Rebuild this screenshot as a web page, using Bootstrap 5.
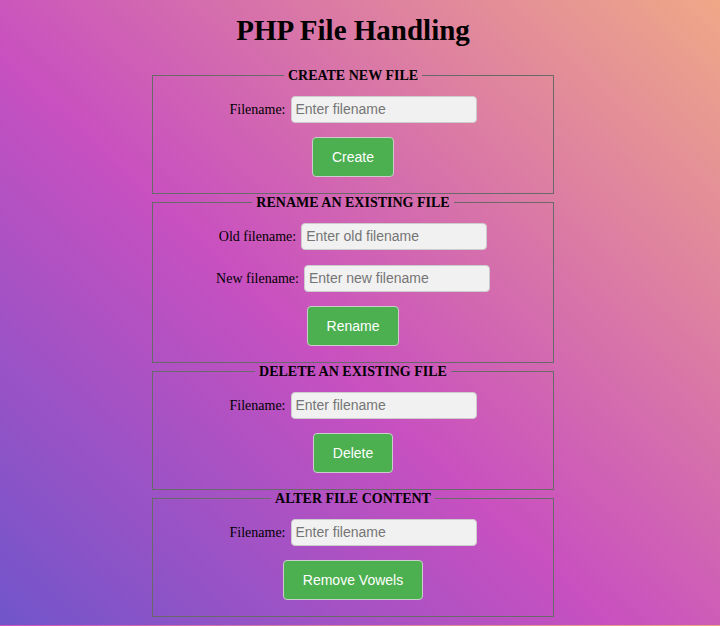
<!DOCTYPE html>
<html lang="en">
<head>
<meta charset="utf-8">
<meta name="viewport" content="width=device-width, initial-scale=1">
<title>PHP File Handling</title>
<link href="https://cdn.jsdelivr.net/npm/bootstrap@5.3.0/dist/css/bootstrap.min.css" rel="stylesheet">
<style>
  body {
    background: linear-gradient(43deg, #7155ca 0%, #c850c0 44%, #efa887 100%);
    color: #000;
    font-family: "Liberation Serif", "Times New Roman", serif;
    font-size: 14px;
    line-height: 17px;
    padding: 14px 14px 8px 0;
  }
  .page-title { font-size: 29px; line-height: 33px; margin-bottom: 20px; }
  .file-forms { max-width: 402px; }
  .file-group { border: 1px solid #696969; padding: 12px 12px 16px; }
  .file-group legend {
    float: none;
    width: auto;
    margin: 0 auto;
    padding: 0 4px;
    font-size: 14px;
    line-height: 17px;
  }
  .field-row { gap: 5px; margin-bottom: 14px; }
  .field-row + .field-row { margin-top: 15px; }
  .file-input {
    width: 186px;
    padding: 4px;
    font: 14px/17px "Liberation Sans", Arial, sans-serif;
    background: #f1f1f1;
    border: 1px solid #ccc;
    border-radius: 4px;
  }
  .file-input::placeholder { color: #757575; opacity: 1; }
  .btn-file {
    --bs-btn-color: #fff;
    --bs-btn-bg: #4caf50;
    --bs-btn-border-color: #ccc;
    --bs-btn-hover-color: #fff;
    --bs-btn-hover-bg: #45a049;
    --bs-btn-hover-border-color: #ccc;
    --bs-btn-padding-x: 19px;
    --bs-btn-padding-y: 10px;
    --bs-btn-border-radius: 4px;
    --bs-btn-font-family: "Liberation Sans", Arial, sans-serif;
    --bs-btn-font-size: 14px;
    --bs-btn-line-height: 18px;
    line-height: 18px;
  }
</style>
<script src="https://cdn.jsdelivr.net/npm/bootstrap@5.3.0/dist/js/bootstrap.bundle.min.js" defer></script>
</head>
<body>
<h1 class="page-title fw-bold text-center">PHP File Handling</h1>
<main class="file-forms mx-auto">
  <form>
    <fieldset class="file-group text-center">
      <legend class="fw-bold text-uppercase">Create new file</legend>
      <div class="field-row d-flex justify-content-center align-items-center">
        <label for="create-name">Filename:</label>
        <input class="file-input" type="text" id="create-name" placeholder="Enter filename">
      </div>
      <button type="button" class="btn btn-file">Create</button>
    </fieldset>
  </form>
  <form>
    <fieldset class="file-group text-center">
      <legend class="fw-bold text-uppercase">Rename an existing file</legend>
      <div class="field-row d-flex justify-content-center align-items-center">
        <label for="old-name">Old filename:</label>
        <input class="file-input" type="text" id="old-name" placeholder="Enter old filename">
      </div>
      <div class="field-row d-flex justify-content-center align-items-center">
        <label for="new-name">New filename:</label>
        <input class="file-input" type="text" id="new-name" placeholder="Enter new filename">
      </div>
      <button type="button" class="btn btn-file">Rename</button>
    </fieldset>
  </form>
  <form>
    <fieldset class="file-group text-center">
      <legend class="fw-bold text-uppercase">Delete an existing file</legend>
      <div class="field-row d-flex justify-content-center align-items-center">
        <label for="delete-name">Filename:</label>
        <input class="file-input" type="text" id="delete-name" placeholder="Enter filename">
      </div>
      <button type="button" class="btn btn-file">Delete</button>
    </fieldset>
  </form>
  <form>
    <fieldset class="file-group text-center">
      <legend class="fw-bold text-uppercase">Alter file content</legend>
      <div class="field-row d-flex justify-content-center align-items-center">
        <label for="alter-name">Filename:</label>
        <input class="file-input" type="text" id="alter-name" placeholder="Enter filename">
      </div>
      <button type="button" class="btn btn-file">Remove Vowels</button>
    </fieldset>
  </form>
</main>
</body>
</html>
